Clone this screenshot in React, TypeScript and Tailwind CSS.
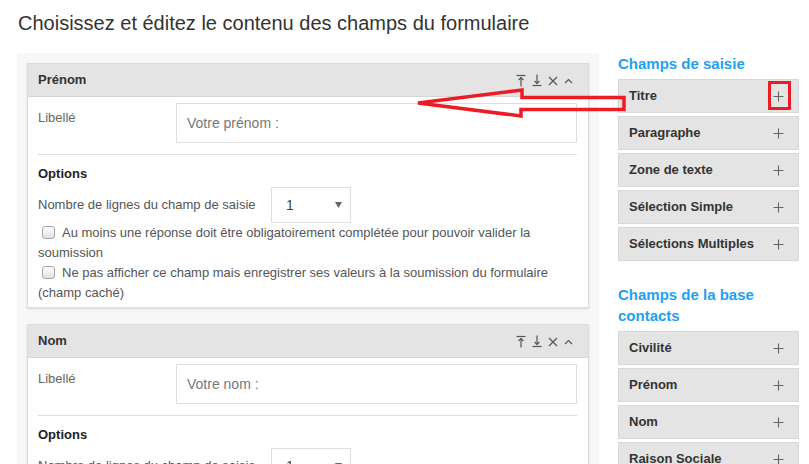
import React from 'react'

const font = { fontFamily: '"Liberation Sans", Arial, sans-serif' }

function ToTop() {
  return (
    <svg width="10" height="13" viewBox="0 0 10 13" fill="none" stroke="#555" strokeWidth="1.2">
      <path d="M0.5 1.5H9.5" />
      <path d="M5 3.5V12.5" />
      <path d="M2.6 6L5 3.6L7.4 6" />
    </svg>
  )
}

function ToBottom() {
  return (
    <svg width="10" height="13" viewBox="0 0 10 13" fill="none" stroke="#555" strokeWidth="1.2">
      <path d="M0.5 11.5H9.5" />
      <path d="M5 0.5V9.5" />
      <path d="M2.6 7L5 9.4L7.4 7" />
    </svg>
  )
}

function Close() {
  return (
    <svg width="10" height="10" viewBox="0 0 10 10" fill="none" stroke="#555" strokeWidth="1.2">
      <path d="M1 1L9 9M9 1L1 9" />
    </svg>
  )
}

function Caret() {
  return (
    <svg width="9" height="6" viewBox="0 0 9 6" fill="none" stroke="#555" strokeWidth="1.2">
      <path d="M1 5L4.5 1.5L8 5" />
    </svg>
  )
}

function Plus() {
  return (
    <svg width="11" height="11" viewBox="0 0 11 11" fill="none" stroke="#666" strokeWidth="1.1">
      <path d="M5.5 0.5V10.5M0.5 5.5H10.5" />
    </svg>
  )
}

function Checkbox() {
  return (
    <span className="inline-block w-[13px] h-[13px] border border-[#a6a6a6] rounded-[3px] bg-gradient-to-b from-[#fdfdfd] to-[#e2e2e2] align-[-2px] ml-[4px] mr-[7px]" />
  )
}

function FieldCard({ title, placeholder }: { title: string; placeholder: string }) {
  return (
    <div className="bg-white border border-[#dcdcdc] shadow-[0_1px_2px_rgba(0,0,0,0.12)] mb-[16px]">
      <div className="h-[33px] bg-[#e4e4e4] border-b border-[#d6d6d6] flex items-center justify-between pl-[10px] pr-[15px]">
        <span className="text-[13px] font-bold text-[#333]">{title}</span>
        <div className="flex items-center gap-[6px] pt-[1px]">
          <ToTop />
          <ToBottom />
          <Close />
          <Caret />
        </div>
      </div>
      <div className="px-[10px] pt-[6px] pb-[4px]">
        <div className="flex">
          <div className="w-[138px] pt-[6px] text-[13px] leading-[17px] text-[#666]">Libellé</div>
          <div className="w-[401px] h-[40px] border border-[#dedede] flex items-center pl-[10px] text-[14px] text-[#777]">
            {placeholder}
          </div>
        </div>
        <div className="mt-[11px] h-px bg-[#dddddd] mr-[1px]" />
        <div className="mt-[10px] text-[13px] leading-[17px] font-bold text-[#222]">Options</div>
        <div className="mt-[5px] flex items-center h-[36px]">
          <span className="text-[13px] text-[#555] w-[233px]">Nombre de lignes du champ de saisie</span>
          <div className="w-[80px] h-[36px] border border-[#dedede] flex items-center justify-between pl-[14px] pr-[8px] text-[14px] text-[#444]">
            <span>1</span>
            <svg width="7" height="6" viewBox="0 0 7 6">
              <path d="M0 0H7L3.5 6Z" fill="#666" />
            </svg>
          </div>
        </div>
        <div className="text-[13px] leading-[20px] text-[#555]">
          <Checkbox />
          Au moins une réponse doit être obligatoirement complétée pour pouvoir valider la soumission
        </div>
        <div className="text-[13px] leading-[20px] text-[#555]">
          <Checkbox />
          Ne pas afficher ce champ mais enregistrer ses valeurs à la soumission du formulaire (champ caché)
        </div>
      </div>
    </div>
  )
}

function SideItem({ label }: { label: string }) {
  return (
    <div className="h-[34px] mb-[3px] bg-[#e4e4e4] border border-[#d8d8d8] flex items-center justify-between pl-[10px] pr-[14px]">
      <span className="text-[13px] font-bold text-[#333]">{label}</span>
      <Plus />
    </div>
  )
}

export default function App() {
  return (
    <div className="relative w-[809px] h-[464px] overflow-hidden bg-white" style={font}>
      <div className="pl-[17px] pt-[9px]">
        <h1 className="pl-px text-[20px] leading-[28px] text-[#333] font-normal">
          Choisissez et éditez le contenu des champs du formulaire
        </h1>
        <div className="mt-[16px] flex items-start">
          <div className="w-[582px] h-[420px] bg-[#f7f7f7] p-[10px]">
            <FieldCard title="Prénom" placeholder="Votre prénom :" />
            <FieldCard title="Nom" placeholder="Votre nom :" />
          </div>
          <div className="ml-[19px] w-[181px]">
            <div className="text-[15px] leading-[21px] font-bold text-[#1ea1f2] mb-[5px]">Champs de saisie</div>
            <SideItem label="Titre" />
            <SideItem label="Paragraphe" />
            <SideItem label="Zone de texte" />
            <SideItem label="Sélection Simple" />
            <SideItem label="Sélections Multiples" />
            <div className="mt-[23px] text-[15px] leading-[21px] font-bold text-[#1ea1f2] mb-[5px] pr-[40px]">
              Champs de la base contacts
            </div>
            <SideItem label="Civilité" />
            <SideItem label="Prénom" />
            <SideItem label="Nom" />
            <SideItem label="Raison Sociale" />
          </div>
        </div>
      </div>
      <svg className="absolute left-0 top-0 pointer-events-none" width="809" height="464" viewBox="0 0 809 464">
        <path
          d="M418 103L522 90V97.5H624V109.5H521V116Z"
          fill="none"
          stroke="#ec1c24"
          strokeWidth="3.5"
          strokeLinejoin="miter"
        />
        <rect x="769.5" y="82.5" width="20" height="26" fill="none" stroke="#ec1c24" strokeWidth="3" />
      </svg>
    </div>
  )
}
